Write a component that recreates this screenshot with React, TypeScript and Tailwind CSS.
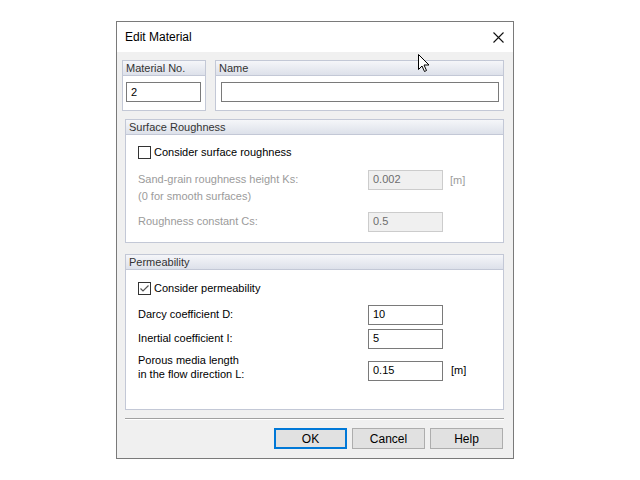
import React from "react";

const font = { fontFamily: '"Liberation Sans", Arial, sans-serif' };

function GroupHeader({ title }: { title: string }) {
  return (
    <div className="h-[15px] flex items-center pl-[3px] text-[11px] text-[#333] bg-gradient-to-b from-[#f5f6f9] to-[#dde1ea] border-b border-[#c3c8d6] leading-none">
      {title}
    </div>
  );
}

function Checkbox({ checked }: { checked?: boolean }) {
  return (
    <div className="w-[13px] h-[13px] border border-[#333] bg-white flex items-center justify-center">
      {checked && (
        <svg width="11" height="11" viewBox="0 0 11 11">
          <path d="M1.5 5.5 L4 8 L9.5 2.5" fill="none" stroke="#555" strokeWidth="1.2" />
        </svg>
      )}
    </div>
  );
}

function Input({ value, disabled, w = 75 }: { value: string; disabled?: boolean; w?: number }) {
  return (
    <div
      className={`h-[20px] flex items-center pl-[4px] text-[11px] border ${
        disabled ? "border-[#cccccc] bg-[#f0f0f0] text-[#6d6d6d]" : "border-[#7a7a7a] bg-white text-black"
      }`}
      style={{ width: w }}
    >
      {value}
    </div>
  );
}

function Button({ label, primary }: { label: string; primary?: boolean }) {
  return (
    <div
      className={`w-[73px] h-[21px] flex items-center justify-center text-[12px] text-black bg-[#e1e1e1] ${
        primary ? "border-2 border-[#0078d7]" : "border border-[#adadad]"
      }`}
    >
      {label}
    </div>
  );
}

export default function App() {
  return (
    <div className="relative w-[640px] h-[480px] bg-white pt-[21px] pl-[116px]" style={font}>
      <div className="w-[398px] h-[438px] border border-[#7a7a7a] bg-[#f0f0f0] flex flex-col">
        <div className="h-[30px] bg-white flex items-center justify-between pl-[8px] pr-[9px]">
          <span className="text-[12px] text-black">Edit Material</span>
          <svg width="11" height="11" viewBox="0 0 11 11">
            <path d="M0.5 0.5 L10.5 10.5 M10.5 0.5 L0.5 10.5" stroke="#111" strokeWidth="1.1" />
          </svg>
        </div>

        <div className="flex pl-[5px] mt-[8px] gap-[9px]">
          <div className="w-[84px] h-[51px] border border-[#c3c8d6] bg-white flex flex-col">
            <GroupHeader title="Material No." />
            <div className="pl-[3px] mt-[6px]">
              <Input value="2" w={75} />
            </div>
          </div>
          <div className="w-[289px] h-[51px] border border-[#c3c8d6] bg-white flex flex-col">
            <GroupHeader title="Name" />
            <div className="pl-[5px] mt-[6px]">
              <Input value="" w={278} />
            </div>
          </div>
        </div>

        <div className="ml-[8px] mt-[8px] w-[379px] h-[124px] border border-[#c3c8d6] bg-white flex flex-col">
          <GroupHeader title="Surface Roughness" />
          <div className="pl-[12px] mt-[9px] flex items-center gap-[3px] text-[11px] text-black">
            <Checkbox />
            <span>Consider surface roughness</span>
          </div>
          <div className="pl-[12px] mt-[9px] flex text-[11px] text-[#9b9b9b]">
            <div className="w-[230px] flex flex-col leading-[17px] pt-[1px]">
              <span>Sand-grain roughness height Ks:</span>
              <span>(0 for smooth surfaces)</span>
            </div>
            <Input value="0.002" disabled />
            <span className="ml-[7px] leading-[20px]">[m]</span>
          </div>
          <div className="pl-[12px] mt-[7px] flex items-center text-[11px] text-[#9b9b9b]">
            <span className="w-[230px]">Roughness constant Cs:</span>
            <Input value="0.5" disabled />
          </div>
        </div>

        <div className="ml-[8px] mt-[11px] w-[379px] h-[156px] border border-[#c3c8d6] bg-white flex flex-col">
          <GroupHeader title="Permeability" />
          <div className="pl-[12px] mt-[10px] flex items-center gap-[3px] text-[11px] text-black">
            <Checkbox checked />
            <span>Consider permeability</span>
          </div>
          <div className="pl-[12px] mt-[8px] flex items-center text-[11px] text-black">
            <span className="w-[230px]">Darcy coefficient D:</span>
            <Input value="10" />
          </div>
          <div className="pl-[12px] mt-[4px] flex items-center text-[11px] text-black">
            <span className="w-[230px]">Inertial coefficient I:</span>
            <Input value="5" />
          </div>
          <div className="pl-[12px] mt-[12px] flex items-center text-[11px] text-black">
            <div className="w-[230px] flex flex-col leading-[14px] -mt-[8px]">
              <span>Porous media length</span>
              <span>in the flow direction L:</span>
            </div>
            <Input value="0.15" />
            <span className="ml-[8px]">[m]</span>
          </div>
        </div>

        <div className="ml-[8px] mt-[8px] w-[379px] h-[2px] border-t border-[#a0a0a0] border-b border-b-white" />

        <div className="flex justify-end gap-[5px] pr-[10px] mt-[8px]">
          <Button label="OK" primary />
          <Button label="Cancel" />
          <Button label="Help" />
        </div>
      </div>

      <svg className="absolute left-[418px] top-[54px]" width="12" height="19" viewBox="0 0 12 19">
        <path
          d="M0.5 0.5 L0.5 15.5 L4 12 L6.5 17.5 L8.5 16.5 L6 11 L11 11 Z"
          fill="#fff"
          stroke="#000"
          strokeWidth="1"
          strokeLinejoin="miter"
        />
      </svg>
    </div>
  );
}
